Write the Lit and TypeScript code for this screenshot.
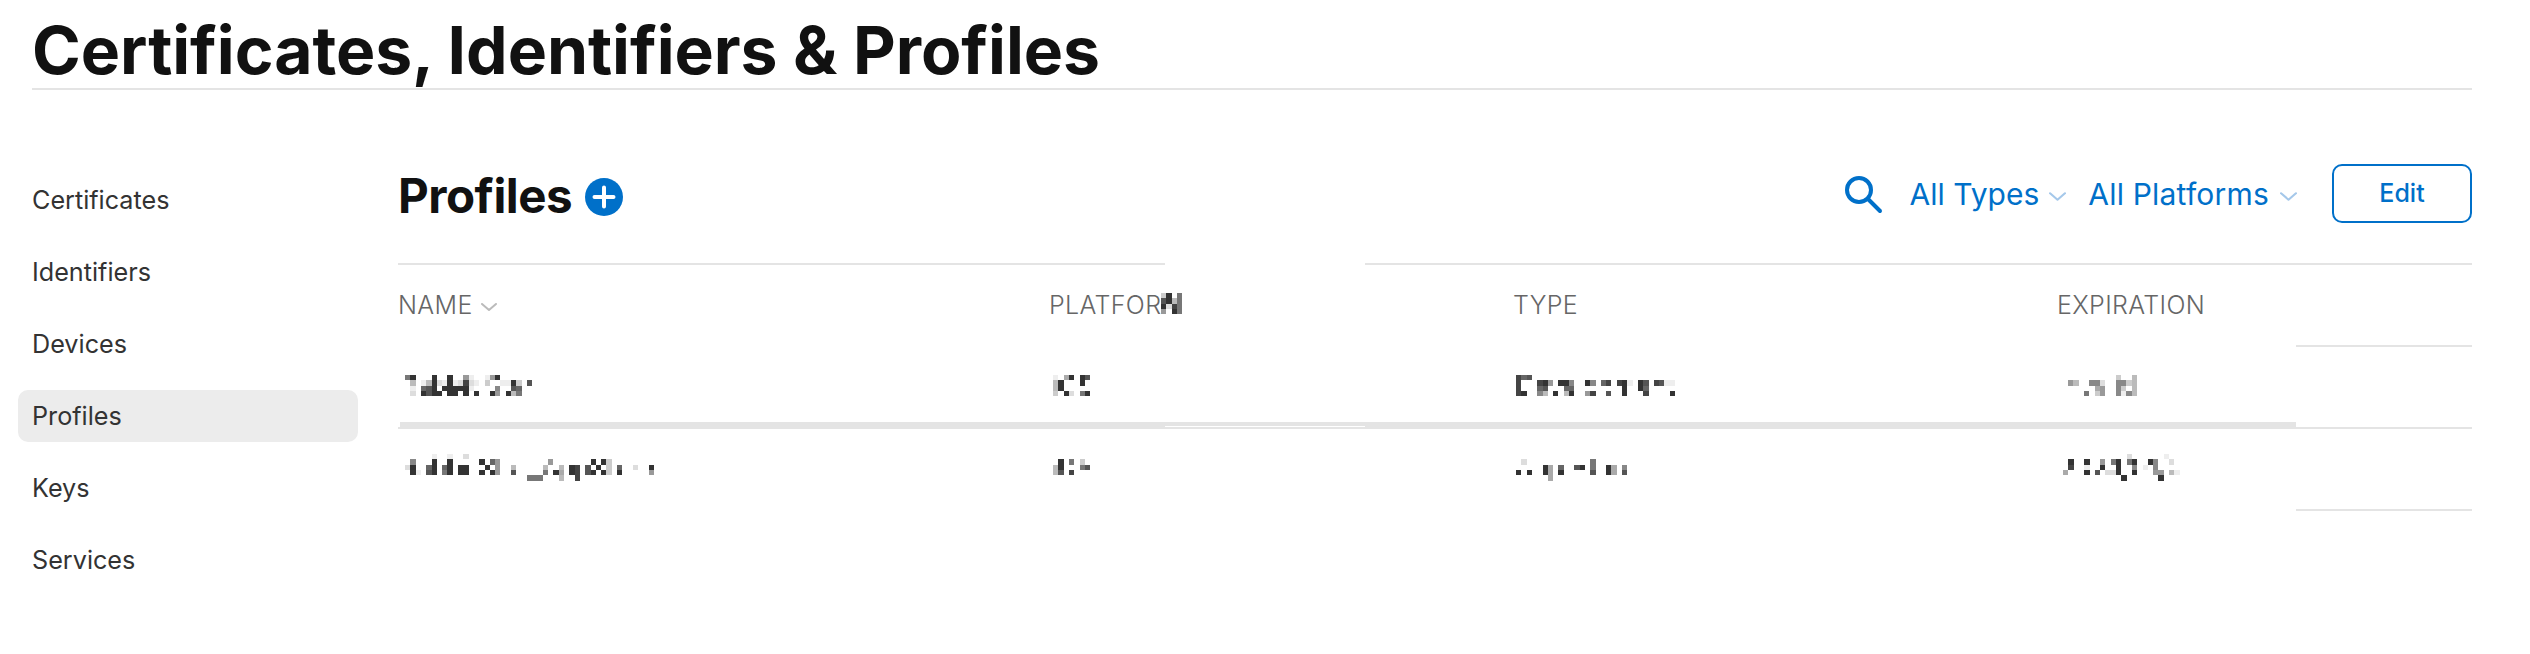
import { LitElement, html, css, svg } from "lit";
import { customElement } from "lit/decorators.js";

const CELL = 5.3;

// Redacted cells: each row is a list of "column:grey" pairs, grey being one hex digit.
function mosaic(data: string, offset = 0) {
  const rows = data.split("|").map((r) =>
    r.trim() === "" ? [] : r.trim().split(/\s+/).map((p) => p.split(":"))
  );
  const cols = Math.max(1, ...rows.flat().map((p) => Number(p[0]))) + 1;
  const w = Math.ceil(cols * CELL);
  const h = Math.ceil(rows.length * CELL);
  return html`<svg
    class="mosaic"
    style="margin-left:${offset}px"
    width=${w}
    height=${h}
    viewBox="0 0 ${w} ${h}"
    shape-rendering="crispEdges"
    aria-hidden="true"
  >
    ${rows.map((row, y) =>
      row.map(
        ([c, g]) =>
          svg`<rect x=${Number(c) * CELL} y=${y * CELL} width=${CELL} height=${CELL} fill="#${g}${g}${g}"></rect>`
      )
    )}
  </svg>`;
}

const chevron = (cls: string) => html`<svg class=${cls} viewBox="0 0 16 8" fill="none" aria-hidden="true">
  <path d="M1 1l7 6 7-6" stroke="currentColor" stroke-width="2" stroke-linecap="round" stroke-linejoin="round"></path>
</svg>`;

const M_CELL = "0:c 1:3 3:7|0:5 1:3 2:b 3:7|0:3 1:d 2:4 3:7|0:9 2:3 3:7";

const ROWS = [
  {
    cells: [
      ["0:7 1:3 5:3 8:3 11:9 12:e 15:e 16:9 17:3|1:b 3:e 4:b 5:3 6:d 7:e 8:3 9:e 10:d 11:4 12:d 13:e 15:c 18:e 19:e 20:3 21:c 23:5|1:e 3:6 4:5 5:3 7:3 8:3 9:3 10:3 11:3 12:e 17:8 20:5 21:6 24:f|1:d 3:3 4:5 5:3 6:3 8:3 9:3 11:3 13:3 16:3 17:9 19:3 20:b 21:7 23:f", 7],
      ["0:e 1:f 2:a 3:3 5:3 6:5|0:b 1:3 5:3|0:b 1:3|0:c 2:3 3:d 5:7 6:3", 4],
      ["0:4 1:6 2:5|0:4 4:4 5:3 6:9 8:3 9:3 10:8 13:3 14:8 16:6 17:4 19:4 20:3 21:e 23:3 24:5 26:4 27:5 28:e 29:e|0:4 4:6 5:5 9:6 10:6 16:f 20:3 23:3 24:6|0:4 1:3 4:8 5:b 7:3 9:b 10:3 13:9 14:4 17:5 20:3 23:f 24:4 29:3", 3],
      ["9:c 12:b|0:9 1:b 4:8 5:8 6:d 9:8 10:8 11:c 12:b|0:f 5:a 6:9 9:8 10:c 12:b|0:f 3:7 5:c 6:9 9:8 10:e 11:8 12:b", 11],
    ],
  },
  {
    cells: [
      ["5:e 8:e 11:d|1:8 5:3 8:3 12:f 14:3 16:6 17:9 27:9 35:3 37:3 38:c|0:d 1:3 4:6 5:3 7:6 8:3 10:3 11:3 12:f 15:3 17:9 20:b 26:b 29:b 31:3 32:4 34:5 36:3 38:c 40:6 43:d 46:3|1:3 2:e 4:5 5:3 7:7 8:3 10:3 11:3 12:f 14:3 16:3 17:9 20:5 26:7 28:3 29:a 31:3 32:4 34:5 35:3 37:3 38:c 40:3 43:f 46:9|23:7 24:7 25:7 29:b 32:4", 7],
      ["|1:3 3:7 5:c|0:b 1:3 5:7 6:5|0:b 1:5 3:4 5:f", 4],
      ["|1:d 14:7|5:3 6:a 8:6 11:5 12:3 14:7 17:3 18:a 20:8|0:3 2:3 5:3 6:a 8:3 14:5 17:3 18:a 20:5|6:a", 3],
      ["12:d 19:e|1:3 4:3 7:9 9:7 10:3 12:7 13:3 16:3 17:8 20:d 21:f|1:4 4:e 7:3 10:3 13:8 15:e 17:8|0:a 3:f 4:3 6:5 8:d 9:d 10:3 11:f 13:3 17:9 18:9 20:b 21:e 22:f|11:3 18:3", 6],
    ],
  },
];

const NAV = ["Certificates", "Identifiers", "Devices", "Profiles", "Keys", "Services"];

@customElement("app-root")
export class AppRoot extends LitElement {
  static styles = css`
    :host {
      display: block;
      width: 2530px;
      height: 654px;
      overflow: hidden;
      background: #fff;
      font-family: Inter, "Liberation Sans", sans-serif;
      color: #111;
      box-sizing: border-box;
      padding: 0 58px 0 32px;
    }
    * {
      box-sizing: border-box;
    }
    .title {
      height: 90px;
      border-bottom: 2px solid #e4e4e4;
      margin: 0;
      font-size: 66px;
      font-weight: 700;
      line-height: 101px;
      letter-spacing: -0.05px;
      white-space: nowrap;
      color: #111;
    }
    .body {
      display: flex;
      gap: 40px;
      padding-top: 74px;
    }
    .side {
      width: 340px;
      margin-left: -14px;
      padding-top: 10px;
      display: flex;
      flex-direction: column;
      gap: 20px;
      flex: none;
    }
    .nav {
      height: 52px;
      padding-left: 14px;
      border-radius: 10px;
      font-size: 25.2px;
      line-height: 53px;
      color: #333;
    }
    .nav.on {
      background: #ececec;
    }
    .main {
      flex: 1;
      min-width: 0;
    }
    .head {
      height: 101px;
      display: flex;
      align-items: flex-start;
      border-bottom: 2px solid #e4e4e4;
    }
    h2 {
      margin: 0;
      font-size: 47.5px;
      font-weight: 700;
      line-height: 64px;
      letter-spacing: -0.5px;
      color: #111;
    }
    .plus {
      width: 38px;
      height: 38px;
      margin: 14px 0 0 13px;
      flex: none;
    }
    .tools {
      margin-left: auto;
      display: flex;
      align-items: center;
      height: 59px;
      color: #0070c9;
    }
    .search {
      width: 40px;
      height: 40px;
      margin-right: 27px;
      flex: none;
    }
    .filter {
      font-size: 30px;
      line-height: 62px;
      letter-spacing: 0.2px;
      white-space: nowrap;
    }
    .filter.types {
      letter-spacing: 0;
    }
    .chev {
      width: 17px;
      height: 9px;
      margin: 5px 0 0 10px;
      color: #a5c8ea;
      flex: none;
    }
    .chev.first {
      margin-right: 22px;
    }
    .chev.last {
      margin-left: 11px;
      margin-right: 35px;
    }
    .edit {
      width: 140px;
      height: 59px;
      border: 2px solid #0070c9;
      border-radius: 10px;
      background: #fff;
      color: #0070c9;
      font: 500 25px/55px Inter, "Liberation Sans", sans-serif;
      padding: 0;
    }
    .table {
      position: relative;
    }
    .row {
      display: grid;
      grid-template-columns: 651px 464px 544px 415px;
      height: 82px;
      border-bottom: 2px solid #e4e4e4;
    }
    .hdr {
      font-size: 25px;
      line-height: 80px;
      color: #666;
      font-weight: 300;
      letter-spacing: 0.35px;
    }
    .hdr > div {
      display: flex;
      align-items: center;
    }
    .hdr .sort {
      width: 16px;
      height: 8px;
      margin: 4px 0 0 8px;
      color: #bbb;
    }
    .hdr .mosaic {
      margin-left: 1px;
      margin-top: -3px;
    }
    .row.r0 {
      padding-top: 28px;
    }
    .row.r1 {
      padding-top: 25px;
    }
    .mosaic {
      display: block;
    }
    /* Redaction artefacts lying over the table rules */
    .cover {
      position: absolute;
      background: #fff;
    }
    .gap {
      left: 767px;
      top: -2px;
      width: 200px;
      height: 2px;
    }
    .m1 {
      left: 0;
      top: 80px;
      width: 1898px;
      height: 2px;
    }
    .m3 {
      left: 0;
      top: 244px;
      width: 1898px;
      height: 2px;
    }
    .bar {
      left: 2px;
      top: 157px;
      width: 1896px;
      height: 6px;
      background: #e4e4e4;
    }
    .sliver {
      left: 767px;
      top: 161px;
      width: 200px;
      height: 1px;
    }
  `;

  render() {
    return html`
      <h1 class="title">Certificates, Identifiers &amp; Profiles</h1>
      <div class="body">
        <nav class="side">
          ${NAV.map((n) => html`<div class="nav ${n === "Profiles" ? "on" : ""}">${n}</div>`)}
        </nav>
        <section class="main">
          <header class="head">
            <h2>Profiles</h2>
            <svg class="plus" viewBox="0 0 38 38" aria-hidden="true">
              <circle cx="19" cy="19" r="19" fill="#0070c9"></circle>
              <path d="M19 9.5v19M9.5 19h19" stroke="#fff" stroke-width="4" stroke-linecap="round"></path>
            </svg>
            <div class="tools">
              <svg class="search" viewBox="0 0 40 40" fill="none" aria-hidden="true">
                <circle cx="16" cy="16" r="12" stroke="currentColor" stroke-width="4"></circle>
                <path d="M25 25l12 12" stroke="currentColor" stroke-width="4" stroke-linecap="round"></path>
              </svg>
              <span class="filter types">All Types</span>
              ${chevron("chev first")}
              <span class="filter">All Platforms</span>
              ${chevron("chev last")}
              <button class="edit">Edit</button>
            </div>
          </header>
          <div class="table">
            <div class="row hdr">
              <div>NAME${chevron("sort")}</div>
              <div>PLATFOR${mosaic(M_CELL)}</div>
              <div>TYPE</div>
              <div>EXPIRATION</div>
            </div>
            ${ROWS.map(
              (r, i) => html`<div class="row r${i}">
                ${r.cells.map(([d, o]) => html`<div>${mosaic(d as string, o as number)}</div>`)}
              </div>`
            )}
            <div class="cover gap"></div>
            <div class="cover m1"></div>
            <div class="cover m3"></div>
            <div class="cover bar"></div>
            <div class="cover sliver"></div>
          </div>
        </section>
      </div>
    `;
  }
}
